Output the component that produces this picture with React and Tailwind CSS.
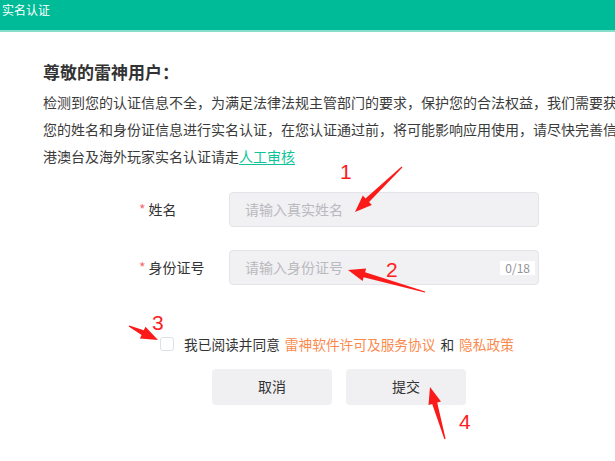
import React from 'react';

const font = { fontFamily: '"Noto Sans CJK SC", "Noto Sans", sans-serif' };

// Red annotation arrow, drawn from tail to tip
const Arrow = ({ x1, y1, x2, y2 }) => {
  const dx = x2 - x1;
  const dy = y2 - y1;
  const len = Math.hypot(dx, dy);
  const ux = dx / len;
  const uy = dy / len;
  const nx = -uy;
  const ny = ux;
  const headLen = 17;
  const hx = x2 - ux * headLen;
  const hy = y2 - uy * headLen;
  const p = (x, y) => `${x.toFixed(1)},${y.toFixed(1)}`;
  const pts = [
    p(x1 + nx * 0.6, y1 + ny * 0.6),
    p(hx + nx * 2.6, hy + ny * 2.6),
    p(hx + nx * 6.5, hy + ny * 6.5),
    p(x2, y2),
    p(hx - nx * 6.5, hy - ny * 6.5),
    p(hx - nx * 2.6, hy - ny * 2.6),
    p(x1 - nx * 0.6, y1 - ny * 0.6),
  ].join(' ');
  return <polygon points={pts} fill="#fb1a1a" />;
};

const Mark = ({ n, className }) => (
  <span
    className={`absolute text-[21px] leading-none text-[#fb1e1e] ${className}`}
    style={{ fontFamily: '"Liberation Sans", Arial, sans-serif' }}
  >
    {n}
  </span>
);

export default function App() {
  return (
    <div className="relative w-[615px] h-[461px] overflow-hidden bg-white" style={font}>
      {/* --- HEADER --- */}
      <div className="h-[32px] bg-[#00bb97] border-b-2 border-[#86dfca]">
        <div className="pl-[2px] pt-[2px] text-[12px] leading-[16px] text-white">实名认证</div>
      </div>

      {/* --- INTRO --- */}
      <div className="pl-[43px]">
        <h1 className="mt-[28px] text-[17px] leading-[24px] font-bold text-[#333]">尊敬的雷神用户：</h1>
        <div className="mt-[5px] text-[14px] leading-[27px] text-[#3b3b3b] whitespace-nowrap">
          <p>检测到您的认证信息不全，为满足法律法规主管部门的要求，保护您的合法权益，我们需要获取您</p>
          <p>您的姓名和身份证信息进行实名认证，在您认证通过前，将可能影响应用使用，请尽快完善信息。</p>
          <p>
            港澳台及海外玩家实名认证请走
            <span className="text-[#10c49a] underline underline-offset-2">人工审核</span>
          </p>
        </div>
      </div>

      {/* --- FORM --- */}
      <div className="ml-[139px] mt-[22px] w-[400px] flex flex-col gap-[23px]">
        <div className="flex items-center">
          <label className="w-[90px] text-[14px] text-[#333]">
            <span className="text-[#f56c6c] mr-[3px]">*</span>姓名
          </label>
          <div className="flex-1 h-[35px] rounded-[4px] border border-[#e4e4e8] bg-[#f1f0f3] flex items-center pl-[15px]">
            <span className="text-[14px] text-[#b9b9be]">请输入真实姓名</span>
          </div>
        </div>
        <div className="flex items-center">
          <label className="w-[90px] text-[14px] text-[#333]">
            <span className="text-[#f56c6c] mr-[3px]">*</span>身份证号
          </label>
          <div className="flex-1 h-[35px] rounded-[4px] border border-[#e4e4e8] bg-[#f1f0f3] flex items-center justify-between pl-[15px] pr-[3px]">
            <span className="text-[14px] text-[#b9b9be]">请输入身份证号</span>
            <span className="bg-white px-[5px] text-[12px] leading-[14px] text-[#909399]">0/18</span>
          </div>
        </div>
      </div>

      <div className="ml-[160px] mt-[49px] flex items-center text-[13.7px] text-[#333]">
        <span className="w-[14px] h-[14px] rounded-[3px] border border-[#dcdfe6] bg-white" />
        <span className="ml-[10px]">我已阅读并同意</span>
        <span className="ml-[5px] text-[#fb8a4e]">雷神软件许可及服务协议</span>
        <span className="ml-[5px]">和</span>
        <span className="ml-[5px] text-[#fb8a4e]">隐私政策</span>
      </div>

      <div className="ml-[212px] mt-[14px] flex gap-[14px]">
        <button className="w-[120px] h-[36px] rounded-[4px] bg-[#f0f0f2] text-[14px] text-[#333]">取消</button>
        <button className="w-[120px] h-[36px] rounded-[4px] bg-[#f0f0f2] text-[14px] text-[#333]">提交</button>
      </div>

      {/* --- ANNOTATIONS --- */}
      <svg className="absolute inset-0 pointer-events-none" width="615" height="461">
        <Arrow x1={402} y1={167} x2={355} y2={212} />
        <Arrow x1={425} y1={292} x2={348} y2={270} />
        <Arrow x1={129} y1={326} x2={158} y2={340} />
        <Arrow x1={445} y1={439} x2={430} y2={387} />
      </svg>
      <Mark n="1" className="left-[340px] top-[161px]" />
      <Mark n="2" className="left-[386px] top-[259px]" />
      <Mark n="3" className="left-[152px] top-[312px]" />
      <Mark n="4" className="left-[459px] top-[411px]" />
    </div>
  );
}
